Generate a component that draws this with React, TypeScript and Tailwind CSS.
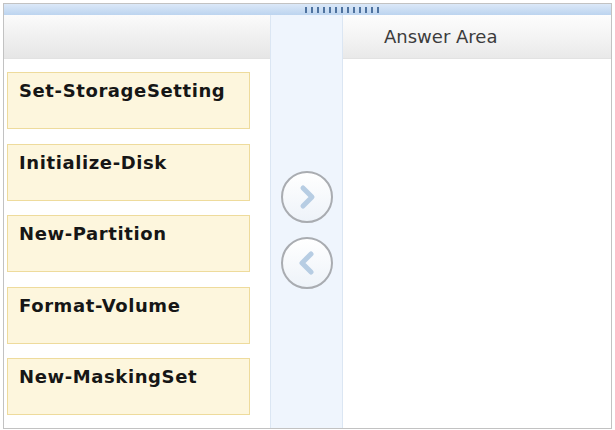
import React from 'react';

const commands = [
  'Set-StorageSetting',
  'Initialize-Disk',
  'New-Partition',
  'Format-Volume',
  'New-MaskingSet',
];

const Chevron = ({ dir }: { dir: 'left' | 'right' }) => (
  <svg width="22" height="26" viewBox="0 0 22 26">
    <path
      d={dir === 'right' ? 'M7 4 L16 13 L7 22' : 'M15 4 L6 13 L15 22'}
      fill="none"
      stroke="#b7cde3"
      strokeWidth="5"
      strokeLinecap="round"
      strokeLinejoin="round"
    />
  </svg>
);

const RoundButton = ({ dir }: { dir: 'left' | 'right' }) => (
  <button className="w-[52px] h-[52px] rounded-full border-2 border-[#a9acb1] bg-gradient-to-b from-[#ffffff] to-[#eef3f9] flex items-center justify-center">
    <Chevron dir={dir} />
  </button>
);

const App = () => {
  return (
    <div
      className="w-[615px] h-[430px] bg-white pt-[3px] px-[3px] pb-[1px]"
      style={{ fontFamily: '"DejaVu Sans", Verdana, sans-serif' }}
    >
      <div className="h-full flex flex-col border border-[#c2c2c2]">
        {/* drag bar */}
        <div className="h-[11px] bg-gradient-to-b from-[#dbe8f8] to-[#bcd4ef] flex items-center">
          <div className="ml-[301px] flex gap-[4px]">
            {Array.from({ length: 13 }).map((_, i) => (
              <div key={i} className="w-[2px] h-[6px] bg-[#4f73a0]" />
            ))}
          </div>
        </div>

        <div className="flex-1 flex">
          {/* choices */}
          <div className="w-[266px] flex flex-col">
            <div className="h-[44px] bg-gradient-to-b from-[#fbfbfb] via-[#f0f0f0] to-[#e6e6e6] border-b border-[#e2e2e2]" />
            <div className="flex flex-col gap-[14.5px] pt-[13px] pl-[3px]">
              {commands.map((c) => (
                <div
                  key={c}
                  className="w-[243px] h-[57px] bg-[#fdf6dd] border border-[#eedb9c] pl-[11px] pt-[4px] text-[18px] tracking-[0.6px] font-bold text-[#161616]"
                >
                  {c}
                </div>
              ))}
            </div>
          </div>

          {/* move buttons */}
          <div className="w-[73px] bg-[#eff5fd] border-x border-[#dbe6f3] flex flex-col items-center pt-[156px] gap-[14px]">
            <RoundButton dir="right" />
            <RoundButton dir="left" />
          </div>

          {/* answer area */}
          <div className="flex-1 flex flex-col">
            <div className="h-[44px] bg-gradient-to-b from-[#fdfdfd] via-[#f4f4f4] to-[#e9e9e9] border-b border-[#e2e2e2] flex items-center pl-[41px] text-[18px] text-[#3c3c3c]">
              Answer Area
            </div>
            <div className="flex-1 bg-white" />
          </div>
        </div>
      </div>
    </div>
  );
};

export default App;
